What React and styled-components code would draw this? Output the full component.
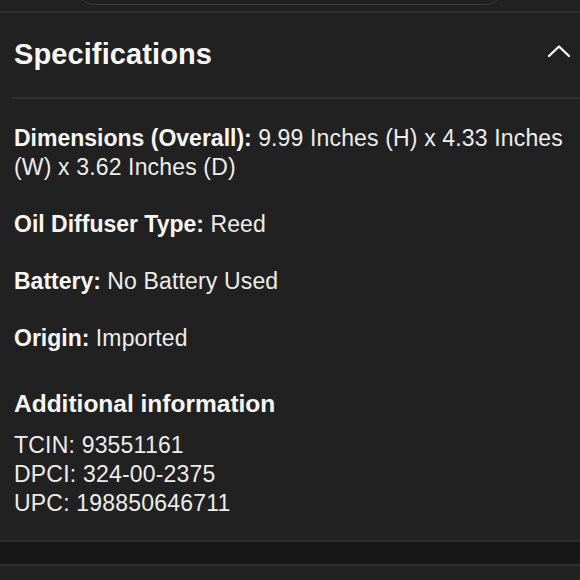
import styled, { createGlobalStyle } from 'styled-components'

const SPECS = [
  { label: 'Dimensions (Overall):', value: '9.99 Inches (H) x 4.33 Inches (W) x 3.62 Inches (D)' },
  { label: 'Oil Diffuser Type:', value: 'Reed' },
  { label: 'Battery:', value: 'No Battery Used' },
  { label: 'Origin:', value: 'Imported' }
]

const IDS = ['TCIN: 93551161', 'DPCI: 324-00-2375', 'UPC: 198850646711']

const GlobalStyle = createGlobalStyle`
  html, body {
    margin: 0;
    padding: 0;
    background: #212121;
  }

  body {
    font-family: "Liberation Sans", Arial, sans-serif;
    color: #f2f2f2;
    -webkit-font-smoothing: antialiased;
  }
`

export default function App() {
  return (
    <Page>
      <GlobalStyle />
      <TopStrip>
        <SearchEdge />
      </TopStrip>
      <Section>
        <SectionHeader>
          <SectionTitle>Specifications</SectionTitle>
          <ToggleButton aria-label="Collapse">
            <svg width="24" height="14" viewBox="0 0 24 14" fill="none">
              <path d="M2 12 L12 2.5 L22 12" stroke="#f5f5f5" strokeWidth="2.4" strokeLinecap="round" strokeLinejoin="round" />
            </svg>
          </ToggleButton>
        </SectionHeader>
        <SpecList>
          {SPECS.map((spec) => (
            <SpecItem key={spec.label}>
              <SpecLabel>{spec.label}</SpecLabel> <SpecValue>{spec.value}</SpecValue>
            </SpecItem>
          ))}
        </SpecList>
        <SubTitle>Additional information</SubTitle>
        <IdList>
          {IDS.map((id) => (
            <IdLine key={id}>{id}</IdLine>
          ))}
        </IdList>
      </Section>
      <Band />
      <Rest />
    </Page>
  )
}

const Page = styled.div`
  width: 580px;
  height: 580px;
  overflow: hidden;
  background: #212121;
`

const TopStrip = styled.div`
  height: 11px;
  overflow: hidden;
  border-bottom: 2px solid #2e2e2e;
  display: flex;
  justify-content: center;
`

const SearchEdge = styled.div`
  width: 428px;
  height: 40px;
  margin-top: -37px;
  border: 1px solid #3a3a3a;
  border-radius: 20px;
  background: #1e1e1e;
`

const Section = styled.section`
  padding: 0;
`

const SectionHeader = styled.div`
  display: flex;
  align-items: center;
  justify-content: space-between;
  height: 84px;
  margin-left: 12px;
  border-bottom: 2px solid #2f2f2f;
`

const SectionTitle = styled.h2`
  margin: 0 0 2px 2px;
  font-size: 29px;
  font-weight: 700;
  color: #f7f7f7;
  letter-spacing: 0.1px;
`

const ToggleButton = styled.button`
  display: flex;
  align-items: center;
  justify-content: center;
  width: 40px;
  height: 40px;
  margin: 0 1px 8px 0;
  padding: 0;
  border: 0;
  background: transparent;
`

const SpecList = styled.div`
  display: flex;
  flex-direction: column;
  gap: 28px;
  padding: 25px 12px 0 14px;
`

const SpecItem = styled.p`
  margin: 0;
  font-size: 23px;
  line-height: 29px;
  color: #ededed;
`

const SpecLabel = styled.strong`
  font-weight: 700;
  color: #f7f7f7;
`

const SpecValue = styled.span`
  letter-spacing: 0.15px;
`

const SubTitle = styled.h3`
  margin: 36px 14px 0;
  font-size: 24.5px;
  line-height: 30px;
  font-weight: 700;
  color: #f7f7f7;
`

const IdList = styled.div`
  display: flex;
  flex-direction: column;
  padding: 12px 14px 0;
`

const IdLine = styled.div`
  font-size: 23px;
  line-height: 29px;
  letter-spacing: 0.2px;
  color: #ededed;
`

const Band = styled.div`
  margin-top: 22px;
  height: 22px;
  border-top: 2px solid #2e2e2e;
  border-bottom: 2px solid #2e2e2e;
  background: #171717;
`

const Rest = styled.div`
  height: 40px;
  background: #222222;
`
